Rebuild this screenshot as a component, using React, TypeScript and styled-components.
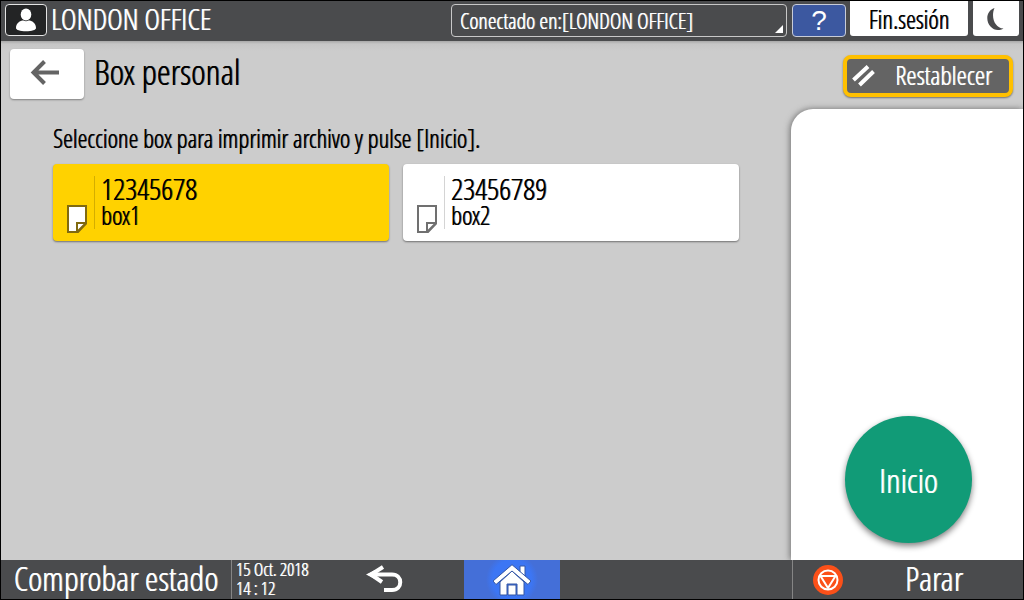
import React, { useState } from "react";
import styled, { createGlobalStyle } from "styled-components";

const GlobalStyle = createGlobalStyle`
  *, *::before, *::after {
    box-sizing: border-box;
    text-shadow: 0 0 0 currentColor, 1px 0 0 color-mix(in srgb, currentColor 50%, transparent);
  }
  body {
    margin: 0;
    background: #cccccc;
    color: #000000;
    font-family: "Open Sans Condensed Light", "Roboto Condensed", "Liberation Sans", sans-serif;
  }
  button, select { font: inherit; color: inherit; padding: 0; margin: 0; cursor: pointer; }
`;

const Screen = styled.div`
  display: flex;
  flex-direction: column;
  min-height: 100vh;
  border: 1px solid #000000;
`;

const TopBar = styled.header`
  display: flex;
  align-items: stretch;
  height: 40px;
  padding: 0 4px;
  background: #4a4b4d;
  color: #ffffff;
`;

const UserButton = styled.button`
  display: grid;
  place-items: center;
  width: 42px;
  height: 32px;
  margin: 3px 4px 0 0;
  border: 1px solid #e4e4e4;
  border-radius: 4px;
  background: #232425;
`;

const UserName = styled.span`
  flex: 1;
  font-size: 30px;
  line-height: 36px;
  white-space: nowrap;
`;

const TopActions = styled.div`
  display: flex;
  gap: 4px;
`;

const ConnectionField = styled.div`
  display: grid;
  grid-template-rows: 100%;
  width: 336px;
  height: 33px;
  margin: 3px 1px 0 0;
`;

const ConnectionSelect = styled.select`
  grid-area: 1 / 1;
  appearance: none;
  width: 100%;
  height: 100%;
  padding: 0 8px 4px;
  border: 1px solid #c8c8c8;
  border-radius: 4px;
  background: #4a4b4d;
  color: #ffffff;
  font-size: 22px;
`;

const Corner = styled.span`
  grid-area: 1 / 1;
  align-self: end;
  justify-self: end;
  margin: 4px;
  border: 4px solid transparent;
  border-right-color: #ffffff;
  border-bottom-color: #ffffff;
  pointer-events: none;
`;

const HelpButton = styled.button`
  width: 54px;
  height: 33px;
  margin-top: 3px;
  border: 1px solid #c8ccd8;
  border-radius: 4px;
  background: #3c58a0;
  color: #ffffff;
  font-family: "Liberation Sans", sans-serif;
  font-size: 28px;
  line-height: 28px;
  text-shadow: none;
`;

const WhiteButton = styled.button<{ $width: number }>`
  width: ${(p) => p.$width}px;
  height: 35px;
  border: 0;
  border-radius: 0 0 3px 3px;
  background: #ffffff;
  color: #000000;
  font-size: 25px;
  line-height: 34px;
  & + & { margin-left: 1px; }
  svg { display: block; margin: 0 auto; }
`;

const Main = styled.main`
  flex: 1;
  display: flex;
  flex-direction: column;
  background: linear-gradient(#a8a8a8, #c6c6c6 3px, #cccccc 10px);
`;

const TitleBar = styled.div`
  display: flex;
  align-items: flex-start;
  height: 68px;
  padding: 8px 10px 0 9px;
`;

const BackButton = styled.button`
  display: grid;
  place-items: center;
  width: 74px;
  height: 50px;
  padding: 0 4px 2px 0;
  margin-right: 10px;
  border: 0;
  border-radius: 4px;
  background: #ffffff;
  box-shadow: 0 1px 2px #808080;
`;

const Title = styled.h1`
  flex: 1;
  margin: 0;
  font-size: 35px;
  font-weight: 400;
  line-height: 46px;
`;

const ResetButton = styled.button`
  display: flex;
  align-items: center;
  justify-content: space-between;
  width: 170px;
  height: 42px;
  margin-top: 6px;
  padding: 0 17px 2px 4px;
  border: 4px solid #ffc000;
  border-radius: 8px;
  background: #646464;
  box-shadow: 0 1px 2px #707070;
  color: #ffffff;
  font-size: 26px;
  line-height: 32px;
`;

const Body = styled.div`
  flex: 1;
  display: flex;
`;

const Content = styled.section`
  flex: 1;
  padding: 14px 52px;
`;

const Instruction = styled.p`
  margin: 0 0 11px;
  font-size: 25px;
  line-height: 30px;
  white-space: nowrap;
`;

const BoxList = styled.div`
  display: grid;
  grid-template-columns: 1fr 1fr;
  gap: 14px;
`;

const BoxCard = styled.button<{ $selected: boolean }>`
  display: flex;
  height: 77px;
  padding: 12px 14px;
  border: 0;
  border-radius: 4px;
  background: ${(p) => (p.$selected ? "#ffd200" : "#ffffff")};
  box-shadow: 0 1px 2px #707070;
  text-align: left;
`;

const BoxIcon = styled.span<{ $selected: boolean }>`
  display: flex;
  align-items: flex-end;
  width: 27px;
  height: 57px;
  color: ${(p) => (p.$selected ? "#806a10" : "#707070")};
`;

const BoxText = styled.span<{ $selected: boolean }>`
  display: flex;
  flex-direction: column;
  height: 53px;
  padding-left: 6px;
  border-left: 1px solid ${(p) => (p.$selected ? "#d4ae00" : "#d4d4d4")};
`;

const BoxNumber = styled.span`
  font-size: 30px;
  line-height: 25px;
`;

const BoxName = styled.span`
  font-size: 25px;
  line-height: 28px;
`;

const SidePanel = styled.aside`
  display: flex;
  flex-direction: column;
  justify-content: flex-end;
  align-items: center;
  width: 232px;
  padding: 0 0 17px 3px;
  border-radius: 22px 0 0 0;
  background: #ffffff;
  box-shadow: -1px 0 6px #707070;
  clip-path: inset(-8px 0 0 -12px);
`;

const StartButton = styled.button`
  width: 127px;
  height: 127px;
  border: 0;
  border-radius: 50%;
  background: #119b77;
  box-shadow: 0 3px 6px #808080;
  color: #ffffff;
  font-size: 34px;
`;

const BottomBar = styled.footer`
  display: flex;
  height: 39px;
  background: #4a4b4d;
  color: #ffffff;
`;

const BarGroup = styled.div<{ $end?: boolean }>`
  flex: 1;
  display: flex;
  justify-content: ${(p) => (p.$end ? "flex-end" : "flex-start")};
`;

const StatusButton = styled.button`
  width: 231px;
  padding-bottom: 3px;
  border: 0;
  border-right: 1px solid #858585;
  background: transparent;
  font-size: 34px;
  line-height: 36px;
  white-space: nowrap;
`;

const Clock = styled.time`
  display: flex;
  flex-direction: column;
  padding: 0 4px;
  font-size: 18px;
  line-height: 19px;
  white-space: nowrap;
`;

const ReturnButton = styled.button`
  display: grid;
  place-items: center;
  width: 96px;
  padding-bottom: 2px;
  margin: 0 31px 0 auto;
  border: 0;
  background: transparent;
`;

const HomeButton = styled.button`
  display: grid;
  place-items: center;
  width: 96px;
  border: 0;
  background: radial-gradient(circle 26px, #3c76f4 75%, #446fd8 100%);
`;

const StopButton = styled.button`
  display: flex;
  align-items: center;
  width: 231px;
  padding-left: 20px;
  border: 0;
  border-left: 1px solid #858585;
  background: transparent;
`;

const StopLabel = styled.span`
  flex: 1;
  padding: 0 28px 3px 30px;
  font-size: 34px;
  line-height: 36px;
`;

const UserIcon = () => (
  <svg width="22" height="24" viewBox="0 0 22 24" fill="#fff" aria-hidden="true">
    <ellipse cx="11" cy="6.5" rx="5.3" ry="6" />
    <path d="M1 20c0-5 4-7.500 7.500-7.500 1.600 1 3.400 1 5 0C17 12.500 21 15 21 20c0 2-4 3.200-10 3.200S1 22 1 20z" />
  </svg>
);

const MoonIcon = () => (
  <svg width="18" height="24" viewBox="0 0 18 24" fill="#4a4b4d" aria-hidden="true">
    <path d="M7.500 1C-1 4 -1.500 14 3.500 19.500 7 23.500 12 24 16.500 21.500 8 21 3.500 10.500 7.500 1z" />
  </svg>
);

const BackIcon = () => (
  <svg width="30" height="26" viewBox="0 0 30 26" fill="none" stroke="#646464" strokeWidth="4" aria-hidden="true">
    <path d="M14.500 1.500 3.500 12.500 14.500 23.500M3.500 12.500H29" />
  </svg>
);

const ResetIcon = () => (
  <svg width="24" height="24" viewBox="0 0 24 24" fill="none" stroke="#fff" strokeWidth="4" aria-hidden="true">
    <path d="M2.500 17 17 3.500M8.500 22 22.500 8.500" />
  </svg>
);

const PageIcon = () => (
  <svg width="20" height="28" viewBox="0 0 20 28" fill="#fff" stroke="currentColor" strokeWidth="2" aria-hidden="true">
    <path d="M1 1H19V18.500L11 27H1Z" />
    <path d="M10 27V18H19M10 27 19 18" />
  </svg>
);

const ReturnIcon = () => (
  <svg width="38" height="28" viewBox="0 0 38 28" fill="none" stroke="#fff" strokeWidth="4" aria-hidden="true">
    <path d="M6 9.500H26c11 0 11 15.500 0 15.500H18" />
    <path d="M17 2 5 9.500 16 17" />
    <path d="M0 9.500 9 5V14Z" fill="#fff" stroke="none" />
  </svg>
);

const HomeIcon = () => (
  <svg width="38" height="32" viewBox="0 0 38 32" fill="#fff" stroke="#3456a4" strokeWidth="1" aria-hidden="true">
    <path d="M27 2h5v13h-5z" />
    <path d="M7 18 19 7 31 18V31H24V20H14V31H7Z" />
    <path d="M15 21h8v10h-8z" />
    <path d="M19 .700 38 17 35 20.500 19 7 3 20.500 0 17Z" />
  </svg>
);

const StopIcon = () => (
  <svg width="30" height="30" viewBox="0 0 30 30" fill="none" stroke="#fff" strokeWidth="2" aria-hidden="true">
    <circle cx="15" cy="15" r="15" fill="#fb5019" stroke="none" />
    <circle cx="15" cy="15" r="9.500" />
    <path d="M7.500 11H22.500L15 23Z" strokeLinejoin="round" />
  </svg>
);

const boxes = [
  { number: "12345678", name: "box1" },
  { number: "23456789", name: "box2" },
];

export default function App() {
  const [selected, setSelected] = useState("12345678");

  return (
    <Screen>
      <GlobalStyle />
      <TopBar>
        <UserButton aria-label="Usuario"><UserIcon /></UserButton>
        <UserName>LONDON OFFICE</UserName>
        <TopActions>
          <ConnectionField>
            <ConnectionSelect aria-label="Conectado en">
              <option>Conectado en:[LONDON OFFICE]</option>
            </ConnectionSelect>
            <Corner />
          </ConnectionField>
          <HelpButton>?</HelpButton>
          <WhiteButton $width={118}>Fin.sesión</WhiteButton>
          <WhiteButton $width={46} aria-label="Reposo"><MoonIcon /></WhiteButton>
        </TopActions>
      </TopBar>

      <Main>
        <TitleBar>
          <BackButton aria-label="Volver"><BackIcon /></BackButton>
          <Title>Box personal</Title>
          <ResetButton><ResetIcon />Restablecer</ResetButton>
        </TitleBar>
        <Body>
          <Content>
            <Instruction>Seleccione box para imprimir archivo y pulse [Inicio].</Instruction>
            <BoxList>
              {boxes.map((box) => {
                const on = box.number === selected;
                return (
                  <BoxCard key={box.number} $selected={on} aria-pressed={on} onClick={() => setSelected(box.number)}>
                    <BoxIcon $selected={on}><PageIcon /></BoxIcon>
                    <BoxText $selected={on}>
                      <BoxNumber>{box.number}</BoxNumber>
                      <BoxName>{box.name}</BoxName>
                    </BoxText>
                  </BoxCard>
                );
              })}
            </BoxList>
          </Content>
          <SidePanel>
            <StartButton>Inicio</StartButton>
          </SidePanel>
        </Body>
      </Main>

      <BottomBar>
        <BarGroup>
          <StatusButton>Comprobar estado</StatusButton>
          <Clock dateTime="2018-10-15T14:12">
            <span>15 Oct. 2018</span>
            <span>14 : 12</span>
          </Clock>
          <ReturnButton aria-label="Atrás"><ReturnIcon /></ReturnButton>
        </BarGroup>
        <HomeButton aria-label="Inicio"><HomeIcon /></HomeButton>
        <BarGroup $end>
          <StopButton>
            <StopIcon />
            <StopLabel>Parar</StopLabel>
          </StopButton>
        </BarGroup>
      </BottomBar>
    </Screen>
  );
}
